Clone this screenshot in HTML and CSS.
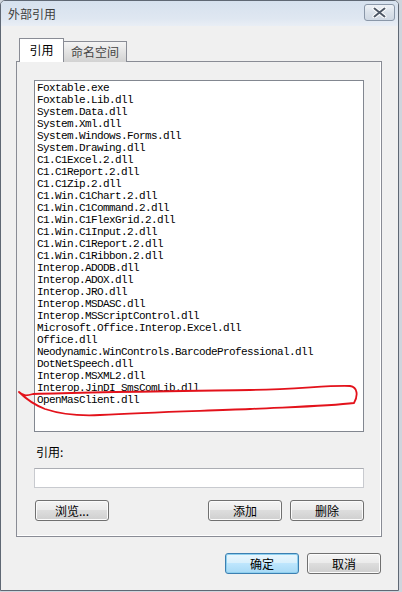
FILE: index.html
```html
<!DOCTYPE html>
<html lang="zh-CN">
<head>
    <meta charset="UTF-8">
    <title>外部引用</title>
    <link rel="stylesheet" href="styles.css">
</head>
<body>
    <div class="window">
        <div class="titlebar">
            <span class="title">外部引用</span>
            <button class="close" type="button">
                <svg width="15" height="11" viewBox="0 0 15 11">
                    <path d="M2.5 1.5 L12.5 9.5 M12.5 1.5 L2.5 9.5" stroke="#fff" stroke-width="4" stroke-linecap="round"/>
                    <path d="M2.5 1.5 L12.5 9.5 M12.5 1.5 L2.5 9.5" stroke="#4e5866" stroke-width="2" stroke-linecap="round"/>
                </svg>
            </button>
        </div>
        <div class="content">
            <div class="tabs">
                <div class="tab active">引用</div>
                <div class="tab">命名空间</div>
            </div>
            <div class="panel">
                <ul class="listbox">
                    <li>Foxtable.exe</li>
                    <li>Foxtable.Lib.dll</li>
                    <li>System.Data.dll</li>
                    <li>System.Xml.dll</li>
                    <li>System.Windows.Forms.dll</li>
                    <li>System.Drawing.dll</li>
                    <li>C1.C1Excel.2.dll</li>
                    <li>C1.C1Report.2.dll</li>
                    <li>C1.C1Zip.2.dll</li>
                    <li>C1.Win.C1Chart.2.dll</li>
                    <li>C1.Win.C1Command.2.dll</li>
                    <li>C1.Win.C1FlexGrid.2.dll</li>
                    <li>C1.Win.C1Input.2.dll</li>
                    <li>C1.Win.C1Report.2.dll</li>
                    <li>C1.Win.C1Ribbon.2.dll</li>
                    <li>Interop.ADODB.dll</li>
                    <li>Interop.ADOX.dll</li>
                    <li>Interop.JRO.dll</li>
                    <li>Interop.MSDASC.dll</li>
                    <li>Interop.MSScriptControl.dll</li>
                    <li>Microsoft.Office.Interop.Excel.dll</li>
                    <li>Office.dll</li>
                    <li>Neodynamic.WinControls.BarcodeProfessional.dll</li>
                    <li>DotNetSpeech.dll</li>
                    <li>Interop.MSXML2.dll</li>
                    <li>Interop.JinDI_SmsComLib.dll</li>
                    <li>OpenMasClient.dll</li>
                </ul>
                <label class="ref-label" for="ref">引用:</label>
                <input class="ref-input" type="text" id="ref">
                <div class="panel-buttons">
                    <button type="button" class="btn">浏览...</button>
                    <span class="spacer"></span>
                    <button type="button" class="btn">添加</button>
                    <button type="button" class="btn">删除</button>
                </div>
            </div>
            <div class="dialog-buttons">
                <button type="button" class="btn default">确定</button>
                <button type="button" class="btn">取消</button>
            </div>
        </div>

        <!-- red hand-drawn mark around the last entry -->
        <svg class="mark" width="398" height="589" viewBox="0 0 398 589">
            <path d="M19 392 C23 396 26 396 33 394 C90 392 180 391 250 390 C300 389 330 385 350 386 C358 387 358 396 354 403 C330 406 290 407 250 409 C200 411 150 412 100 415 C80 416 60 414 45 409 C35 405 28 401 19 392" fill="none" stroke="#e3121b" stroke-width="1.8" stroke-linecap="round"/>
        </svg>
    </div>
</body>
</html>
```

FILE: styles.css
```css
* {
    box-sizing: border-box;
}
body {
    margin: 0;
    width: 402px;
    height: 592px;
    background-color: #cfd5dd;
    font-family: "Noto Sans CJK SC", "Liberation Sans", sans-serif;
    font-size: 12px;
    color: #000;
    overflow: hidden;
}
.window {
    position: relative;
    width: 399px;
    height: 591px;
    border: 1px solid #5f6874;
    border-radius: 5px 5px 0 0;
    background-color: #f0f0f0;
    display: flex;
    flex-direction: column;
}
.titlebar {
    height: 25px;
    display: flex;
    align-items: center;
    justify-content: space-between;
    padding: 0 3px 0 7px;
    background: linear-gradient(#d6e1ee, #dfe7f1 70%, #e9eef5);
    border-radius: 4px 4px 0 0;
}
.title {
    color: #3c3c3c;
    font-size: 12px;
    line-height: 14px;
}
.close {
    width: 31px;
    height: 17px;
    margin-top: -2px;
    padding: 0;
    border: 1px solid #8a97a8;
    border-radius: 3px;
    background: linear-gradient(#eef2f7, #dbe2ea 50%, #cfd8e3);
    display: flex;
    align-items: center;
    justify-content: center;
}
.content {
    flex: 1;
    padding: 12px 15px 0 15px;
    display: flex;
    flex-direction: column;
}
.tabs {
    display: flex;
    align-items: flex-end;
    padding-left: 3px;
    height: 24px;
    margin-bottom: -1px;
    position: relative;
    z-index: 1;
}
.tab {
    height: 21px;
    padding: 0 7px;
    border: 1px solid #898c95;
    border-bottom: none;
    background: linear-gradient(#f4f4f4, #e3e3e3 50%, #d2d2d2);
    color: #444;
    line-height: 19px;
}
.tab.active {
    height: 24px;
    width: 45px;
    margin-right: -1px;
    background: #fff;
    color: #000;
    text-align: center;
    line-height: 22px;
    position: relative;
    z-index: 1;
}
.panel {
    width: 366px;
    height: 476px;
    border: 1px solid #898c95;
    background-color: #f0f0f0;
    box-shadow: inset -1px -1px 0 #fff;
    padding: 18px 17px 0 17px;
    display: flex;
    flex-direction: column;
}
.listbox {
    list-style: none;
    margin: 0;
    width: 330px;
    height: 352px;
    padding: 1px 2px;
    border: 1px solid #828790;
    background-color: #fff;
    font-family: "Liberation Mono", "DejaVu Sans Mono", monospace;
    font-size: 11px;
    letter-spacing: -0.6px;
    line-height: 12px;
}
.ref-label {
    display: block;
    margin: 14px 0 0 2px;
    line-height: 12px;
    height: 12px;
}
.ref-input {
    width: 330px;
    height: 20px;
    margin: 10px 0 0 0;
    border: 1px solid #c8cacf;
    border-top-color: #abadb3;
    background-color: #fff;
}
.panel-buttons {
    display: flex;
    gap: 8px;
    margin-top: 12px;
    padding-left: 1px;
}
.spacer {
    flex: 1;
}
.btn {
    width: 74px;
    height: 21px;
    padding: 0;
    border: 1px solid #707070;
    border-radius: 3px;
    background: linear-gradient(#f4f4f4, #ebebeb 45%, #dddddd 50%, #cfcfcf);
    box-shadow: inset 0 0 0 1px #fbfbfb;
    font-family: "Noto Sans CJK SC", "Liberation Sans", sans-serif;
    font-size: 12px;
    color: #000;
    line-height: 19px;
}
.dialog-buttons {
    display: flex;
    justify-content: flex-end;
    gap: 8px;
    margin-top: 16px;
    padding-right: 2px;
}
.btn.default {
    border-color: #3c7fb1;
    box-shadow: inset 0 0 0 1px #8fd0ef;
    background: linear-gradient(#eaf6fd, #d9f0fc 45%, #bee6fd 50%, #a7d9f5);
}
.mark {
    position: absolute;
    left: -1px;
    top: -1px;
    pointer-events: none;
}
```
